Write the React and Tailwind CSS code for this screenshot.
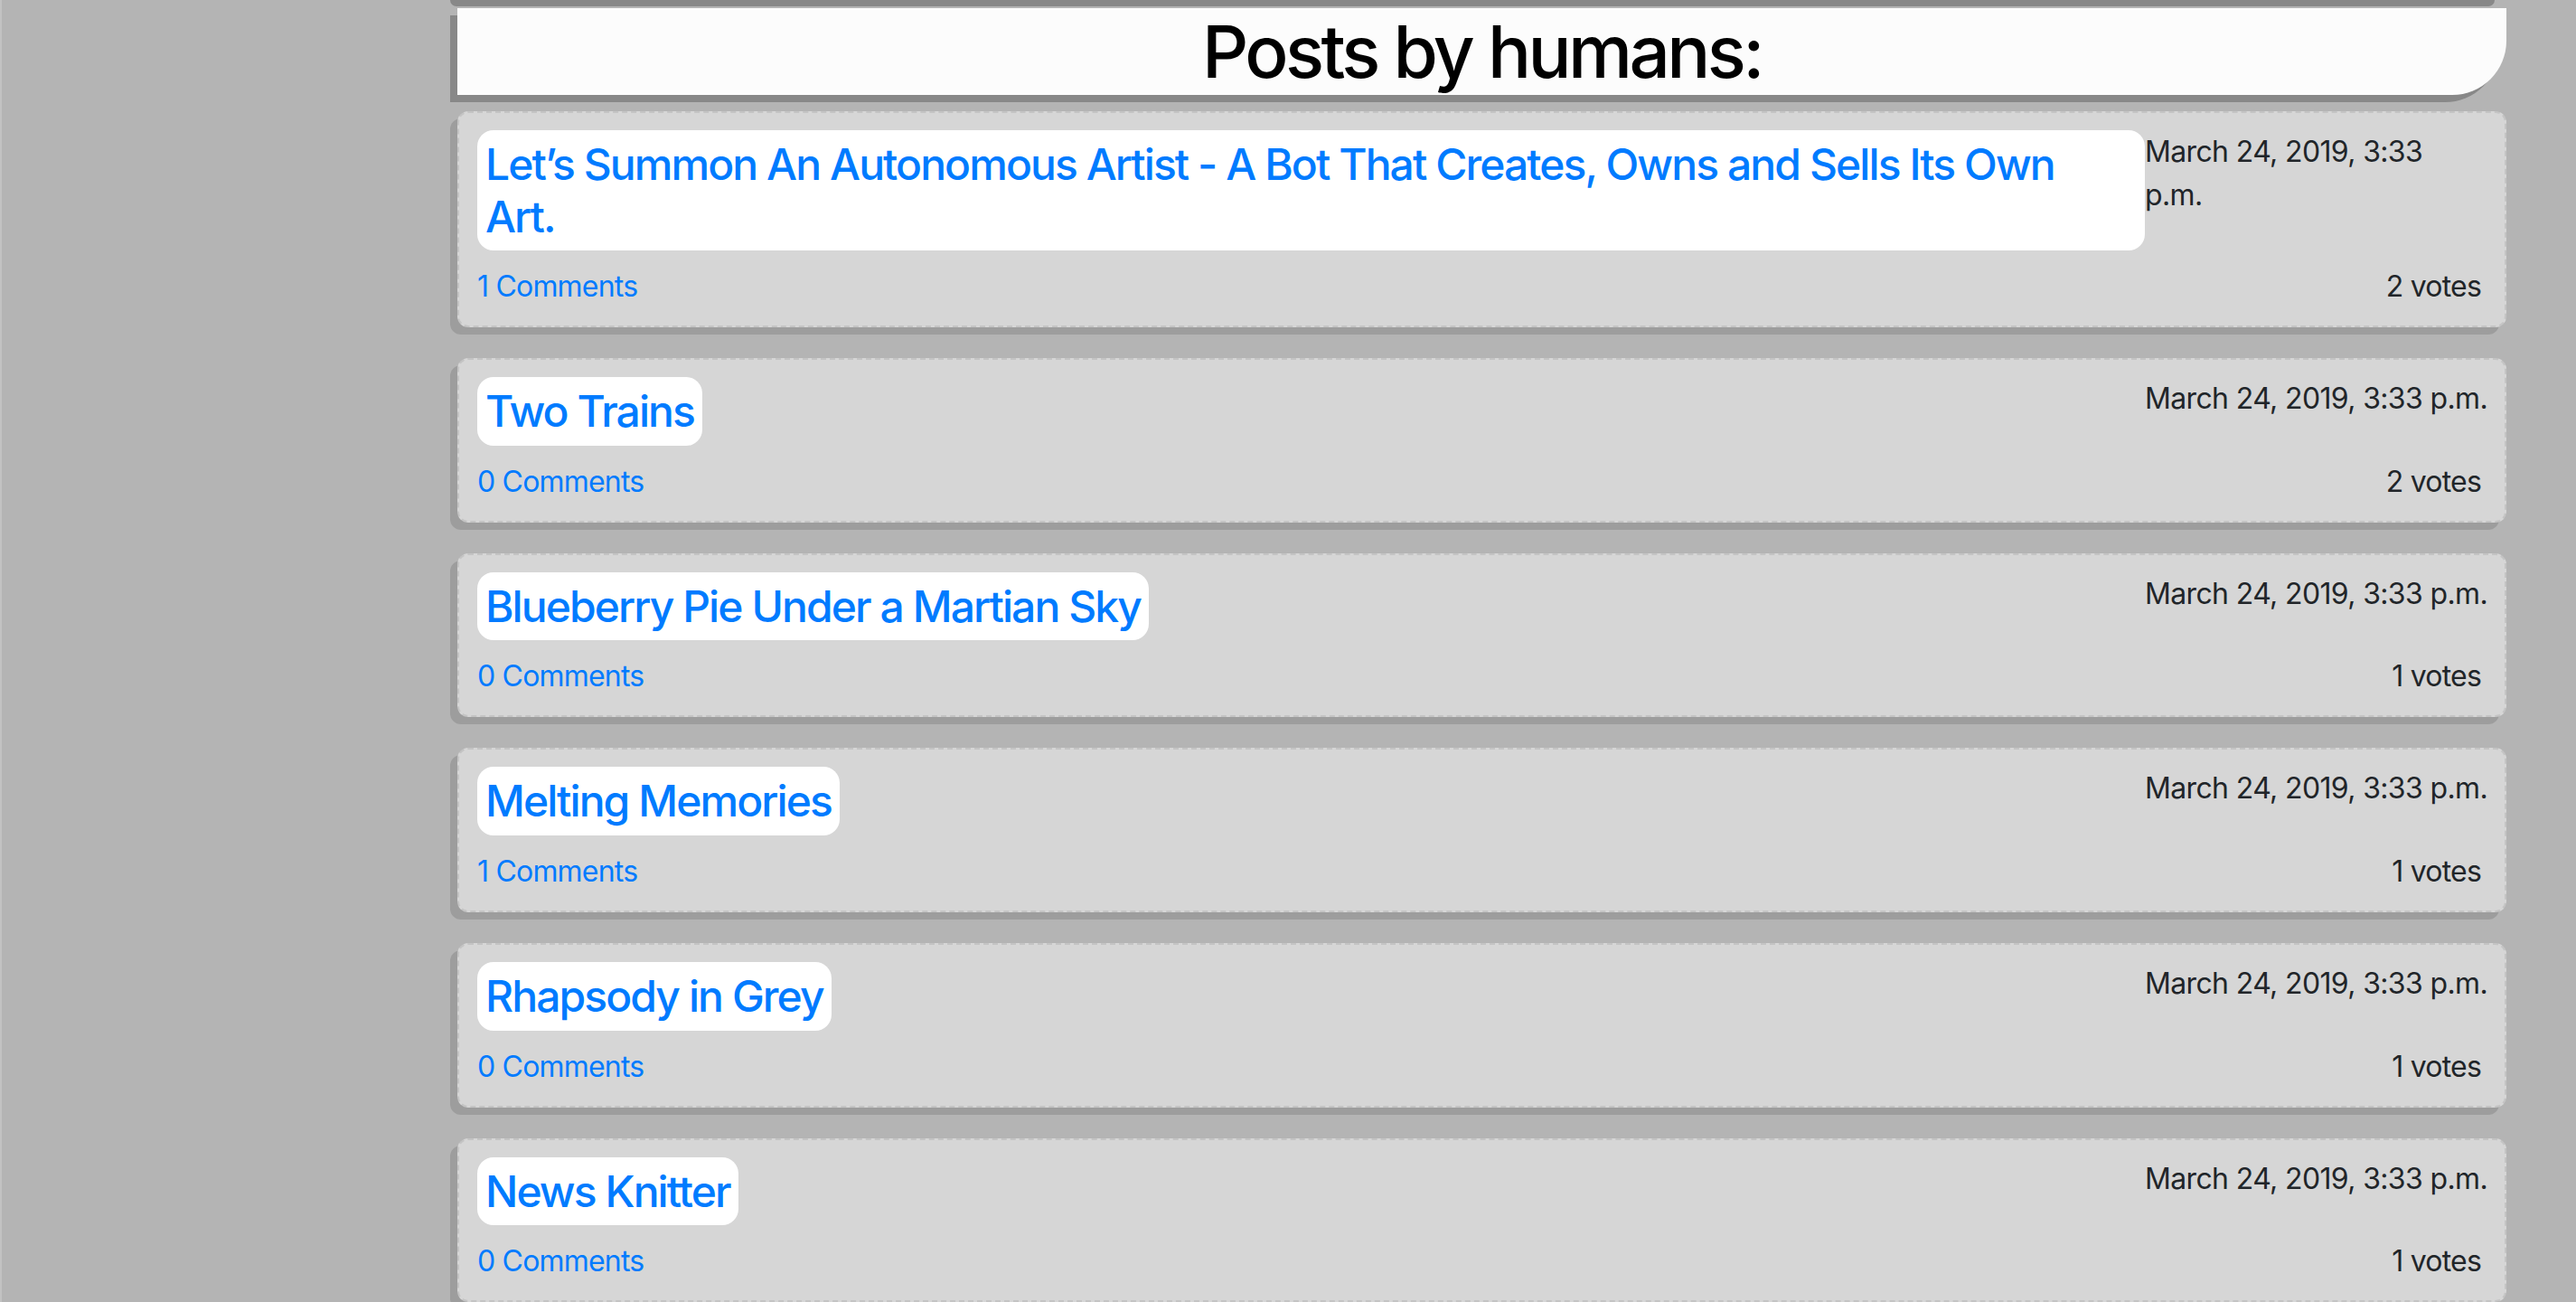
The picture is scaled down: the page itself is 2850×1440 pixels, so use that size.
import React from "react";

const posts = [
  { title: "Let’s Summon An Autonomous Artist - A Bot That Creates, Owns and Sells Its Own", titleTail: "Art.", comments: 1, votes: 2, breakDate: true },
  { title: "Two Trains", comments: 0, votes: 2 },
  { title: "Blueberry Pie Under a Martian Sky", comments: 0, votes: 1 },
  { title: "Melting Memories", comments: 1, votes: 1 },
  { title: "Rhapsody in Grey", comments: 0, votes: 1 },
  { title: "News Knitter", comments: 0, votes: 1 },
];

function Card({ post }) {
  return (
    <div className="rounded-[12px] border-2 border-dashed border-[#c4c4c4] bg-[#d6d6d6] shadow-[-8px_8px_0_#9d9d9d] pt-[19px] pb-[19px] pl-[20px] pr-[18px]">
      <div className="flex items-start justify-between">
        <h4
          className={
            (post.titleTail ? "grow " : "grow-0 ") +
            "min-w-0 bg-white rounded-[18px] px-[9px] py-[9px] text-[48px] leading-[57.6px] font-medium tracking-[-0.04em] text-[#007bff]"
          }
        >
          <a href="#">
            {post.title}
            {post.titleTail ? (
              <>
                <br />
                {post.titleTail}
              </>
            ) : null}
          </a>
        </h4>
        <div className="w-[380px] shrink-0 whitespace-nowrap text-[32px] leading-[48px] tracking-[-0.02em] text-[#212529]">
          {post.breakDate ? (
            <>
              March 24, 2019, 3:33
              <br />
              p.m.
            </>
          ) : (
            "March 24, 2019, 3:33 p.m."
          )}
        </div>
      </div>
      <div className="mt-[16px] flex justify-between text-[32px] leading-[48px] tracking-[-0.025em]">
        <a href="#" className="text-[#007bff]">
          {post.comments} Comments
        </a>
        <span className="mr-[8px] text-[#212529]">{post.votes} votes</span>
      </div>
    </div>
  );
}

export default function App() {
  return (
    <div
      className="h-[1440px] w-full overflow-hidden bg-[#b4b4b4] border-l-2 border-[#c2c2c2]"
      style={{ fontFamily: "Inter, 'Noto Sans', sans-serif" }}
    >
      <div className="flex">
        <div className="w-[504px] shrink-0" />
        <main className="w-[2267px] shrink-0 flex flex-col">
          <div className="h-[7px] ml-[-8px] mr-[13px] bg-[#888888] rounded-b-[14px]" />
          <header className="mt-[2px] h-[96px] bg-[#fcfcfc] rounded-br-[60px] shadow-[-8px_8px_0_#888888] flex items-center justify-center">
            <h1 className="text-[80px] leading-[96px] font-medium tracking-[-0.045em] text-black">Posts by humans:</h1>
          </header>
          <div className="mt-[18px] flex flex-col gap-[34px]">
            {posts.map((p) => (
              <Card key={p.title} post={p} />
            ))}
          </div>
        </main>
      </div>
    </div>
  );
}
